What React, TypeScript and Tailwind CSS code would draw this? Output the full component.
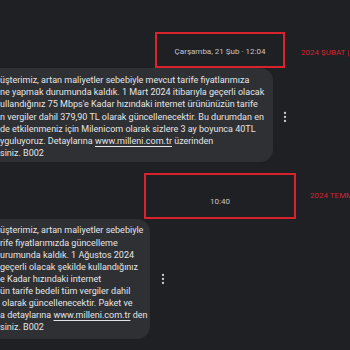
import { ReactNode } from "react";

function Dots() {
  return (
    <svg width="4" height="12" viewBox="0 0 4 12" aria-hidden>
      <circle cx="2" cy="2" r="1.15" fill="#c9cacc" />
      <circle cx="2" cy="6" r="1.15" fill="#c9cacc" />
      <circle cx="2" cy="10" r="1.15" fill="#c9cacc" />
    </svg>
  );
}

function Link({ children }: { children: ReactNode }) {
  return <span className="underline underline-offset-[1.5px]">{children}</span>;
}

const first: ReactNode[] = [
  "üşterimiz, artan maliyetler sebebiyle mevcut tarife fiyatlarımıza",
  "ne yapmak durumunda kaldık. 1 Mart 2024 itibarıyla geçerli olacak",
  "ullandığınız 75 Mbps'e Kadar hızındaki internet ürününüzün tarife",
  "n vergiler dahil 379,90 TL olarak güncellenecektir. Bu durumdan en",
  "de etkilenmeniz için Milenicom olarak sizlere 3 ay boyunca 40TL",
  <>
    yguluyoruz. Detaylarına <Link>www.milleni.com.tr</Link> üzerinden
  </>,
  "siniz. B002",
];

const second: ReactNode[] = [
  "üşterimiz, artan maliyetler sebebiyle",
  "rife fiyatlarımızda güncelleme",
  "urumunda kaldık. 1 Ağustos 2024",
  "geçerli olacak şekilde kullandığınız",
  "e Kadar hızındaki internet",
  "ün tarife bedeli tüm vergiler dahil",
  <span className="pl-[2px]">olarak güncellenecektir. Paket ve</span>,
  <>
    a detaylarına <Link>www.milleni.com.tr</Link> den
  </>,
  "siniz. B002",
];

export default function App() {
  return (
    <div
      className="w-[350px] h-[350px] overflow-hidden bg-[#1f2023] pt-[32px]"
      style={{ fontFamily: "Roboto, 'Noto Sans', sans-serif" }}
    >
      {/* Şubat timestamp */}
      <div className="flex items-center">
        <div className="ml-[155px] w-[130px] shrink-0 h-[36px] border-2 border-[#d8232c] flex items-center justify-center pt-[4px]">
          <span className="text-[8px] leading-[10px] text-[#c3c5c9] whitespace-nowrap">
            Çarşamba, 21 Şub · 12:04
          </span>
        </div>
        <span className="ml-[16px] mt-[6px] text-[8px] leading-[10px] text-[#cf2630] whitespace-nowrap">
          2024 ŞUBAT |
        </span>
      </div>

      {/* first message */}
      <div className="flex items-center">
        <div className="w-[273px] shrink-0 bg-[#2f3033] rounded-r-[13px] pt-[6px] pb-[3px] text-[9px] leading-[12.2px] text-[#e4e5e7] overflow-hidden">
          {first.map((line, i) => (
            <div key={i} className="whitespace-nowrap">
              {line}
            </div>
          ))}
        </div>
        <div className="w-[24px] flex justify-center mt-[3px]">
          <Dots />
        </div>
      </div>

      {/* Temmuz timestamp */}
      <div className="flex items-center mt-[11px]">
        <div className="ml-[144px] w-[152px] shrink-0 h-[46px] border-2 border-[#d8232c] flex items-end justify-center pb-[10px]">
          <span className="text-[8px] leading-[10px] text-[#c3c5c9]">10:40</span>
        </div>
        <span className="ml-[14px] text-[8px] leading-[10px] text-[#cf2630] whitespace-nowrap">
          2024 TEMMUZ
        </span>
      </div>

      {/* second message */}
      <div className="flex items-center">
        <div className="w-[150px] shrink-0 bg-[#2f3033] rounded-r-[13px] pt-[5px] pb-[6px] text-[9px] leading-[12.1px] text-[#e4e5e7] overflow-hidden">
          {second.map((line, i) => (
            <div key={i} className="whitespace-nowrap">
              {line}
            </div>
          ))}
        </div>
        <div className="w-[26px] flex justify-center">
          <Dots />
        </div>
      </div>
    </div>
  );
}
